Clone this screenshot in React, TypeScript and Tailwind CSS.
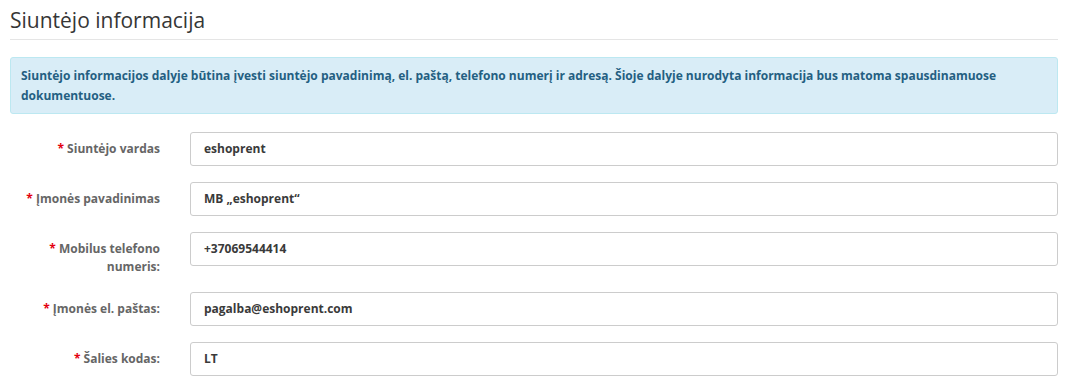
import React from "react";

const rows: { label: React.ReactNode; value: string; two?: boolean }[] = [
  { label: "Siuntėjo vardas", value: "eshoprent" },
  { label: "Įmonės pavadinimas", value: "MB „eshoprent“" },
  { label: <>Mobilus telefono<br />numeris:</>, value: "+37069544414", two: true },
  { label: "Įmonės el. paštas:", value: "pagalba@eshoprent.com" },
  { label: "Šalies kodas:", value: "LT" },
];

export default function App() {
  return (
    <div
      className="bg-white w-[1067px] h-[385px] overflow-hidden pl-[10px] pr-[9px]"
      style={{ fontFamily: '"Open Sans", "Noto Sans", sans-serif' }}
    >
      <h1 className="text-[21px] leading-[26px] pt-[7px] text-[#363636] font-normal">
        Siuntėjo informacija
      </h1>
      <div className="mt-[6px] h-px bg-[#e5e5e5]" />
      <div className="mt-[17px] border border-[#bce8f1] bg-[#d9edf7] rounded-[3px] px-[10px] pt-[8px] pb-[7px] text-[12px] leading-[20px] font-bold text-[#245f82]">
        Siuntėjo informacijos dalyje būtina įvesti siuntėjo pavadinimą, el. paštą, telefono numerį ir adresą. Šioje dalyje nurodyta informacija bus matoma spausdinamuose dokumentuose.
      </div>
      <div className="mt-[18px] flex flex-col gap-[16px]">
        {rows.map((r, i) => (
          <div key={i} className="flex">
            <div className="w-[150px] text-right pt-[8px] text-[12px] leading-[18px] font-bold text-[#666666]">
              <span className="text-[#e3000f]">*</span> {r.label}
            </div>
            <div className="ml-[30px] flex-1">
              <div className="h-[34px] border border-[#cccccc] rounded-[3px] flex items-center px-[13px] text-[12px] font-bold text-[#3a3a3a]">
                {r.value}
              </div>
            </div>
          </div>
        ))}
      </div>
    </div>
  );
}
